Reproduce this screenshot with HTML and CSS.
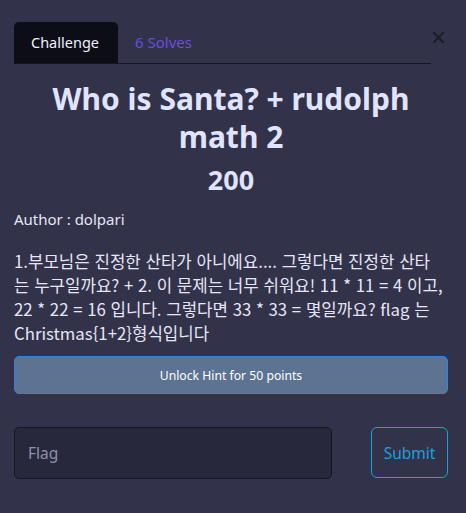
FILE: index.html
```html
<!DOCTYPE html>
<html lang="ko">
<head>
<meta charset="utf-8">
<link rel="stylesheet" href="styles.css">
</head>
<body>
<div class="modal">
  <div class="modal-head">
    <ul class="tabs">
      <li class="tab active">Challenge</li>
      <li class="tab solves">6 Solves</li>
    </ul>
    <button class="close" aria-label="Close">
      <svg width="11" height="11" viewBox="0 0 11 11"><path d="M1 1L10 10M10 1L1 10" stroke="#1c1c2b" stroke-width="2.2" stroke-linecap="square"/></svg>
    </button>
  </div>
  <h1 class="title">Who is Santa? + rudolph math 2</h1>
  <h2 class="points">200</h2>
  <p class="author">Author : dolpari</p>
  <p class="desc">1.부모님은 진정한 산타가 아니에요.... 그렇다면 진정한 산타<br>는 누구일까요? + 2. 이 문제는 너무 쉬워요! 11 * 11 = 4 이고,<br>22 * 22 = 16 입니다. 그렇다면 33 * 33 = 몇일까요? flag 는<br>Christmas{1+2}형식입니다</p>
  <button class="hint">Unlock Hint for 50 points</button>
  <div class="submit-row">
    <input class="flag" type="text" placeholder="Flag">
    <button class="submit">Submit</button>
  </div>
</div>
</body>
</html>
```
FILE: styles.css
```css
* { box-sizing: border-box; }
html, body {
  margin: 0;
  background: #32324a;
}
body {
  font-family: "Noto Sans", "Noto Sans CJK KR", sans-serif;
  color: #e6e6f5;
}
.modal {
  padding: 22px 18px 0 14px;
}
.modal-head {
  display: flex;
  align-items: flex-start;
}
.tabs {
  flex: 1;
  display: flex;
  list-style: none;
  margin: 0;
  padding: 0;
  border-bottom: 1px solid #15151f;
}
.tab {
  height: 41px;
  line-height: 41px;
  font-size: 14.5px;
  padding: 0 17px;
}
.tab.active {
  background: #0d0d16;
  color: #f0f0ff;
  border-radius: 5px 5px 0 0;
  width: 104px;
}
.tab.solves {
  color: #6b4de0;
  font-size: 15px;
}
.close {
  display: flex;
  justify-content: flex-end;
  width: 17px;
  background: none;
  border: 0;
  padding: 0 4px 0 0;
  margin-top: 10px;
}
.close svg {
  display: block;
}
.title {
  margin: 16px 0 0;
  text-align: center;
  font-size: 30px;
  line-height: 37.5px;
  font-weight: 700;
  color: #e1e4ff;
}
.points {
  margin: 9px 0 0;
  text-align: center;
  font-size: 27px;
  line-height: 32px;
  font-weight: 700;
  color: #e1e4ff;
}
.author {
  margin: 12px 0 0;
  font-size: 15px;
  line-height: 22px;
}
.desc {
  margin: 19px 0 0;
  font-family: "Noto Sans CJK KR", sans-serif;
  font-size: 16.8px;
  line-height: 24px;
  white-space: nowrap;
}
.hint {
  display: block;
  width: 100%;
  margin-top: 11px;
  height: 38px;
  background: #5c7391;
  border: 1px solid #2d84e8;
  border-radius: 5px;
  color: #ffffff;
  font-family: "Noto Sans", sans-serif;
  font-size: 12.2px;
}
.submit-row {
  display: flex;
  justify-content: space-between;
  align-items: flex-start;
  margin-top: 33px;
}
.flag {
  width: 318px;
  height: 52px;
  background: #27283c;
  border: 1px solid #16161f;
  border-radius: 5px;
  padding: 0 13px;
  font-family: "Noto Sans", sans-serif;
  font-size: 15.5px;
  color: #e6e6f5;
}
.flag::placeholder {
  color: #8f90aa;
}
.submit {
  width: 77px;
  height: 51px;
  background: transparent;
  border: 1px solid #1aa0df;
  border-radius: 6px;
  color: #1aa0df;
  font-family: "Noto Sans", sans-serif;
  font-size: 15.5px;
}
```
